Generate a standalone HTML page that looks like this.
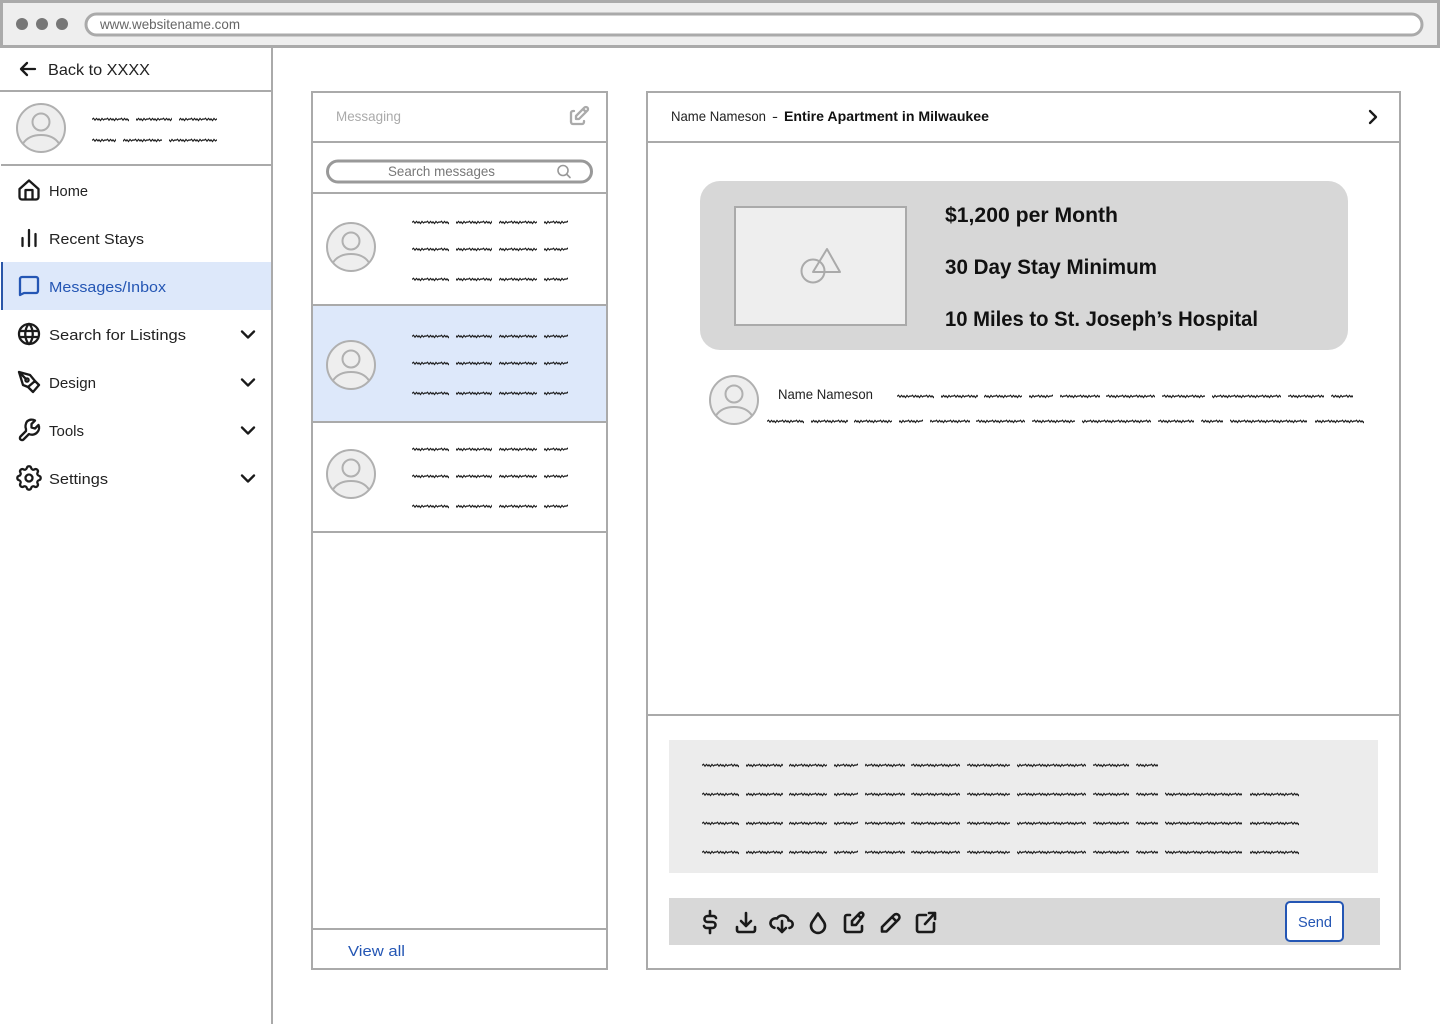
<!DOCTYPE html>
<html lang="en">
<head>
<meta charset="utf-8">
<title>Messages</title>
<style>
html,body{margin:0;padding:0;background:#fff;width:1440px;height:1024px;overflow:hidden}
svg{display:block;position:absolute;left:0;top:0}
text{font-family:"Liberation Sans",sans-serif;font-size:15px;fill:#222}
.i{fill:none;stroke:#1a1a1a;stroke-width:2.300;stroke-linecap:round;stroke-linejoin:round}
.t{stroke-width:2.600}
.b{font-weight:bold;font-size:21px;fill:#111}
</style>
</head>
<body>
<svg width="1440" height="1024" viewBox="0 0 1440 1024" xmlns="http://www.w3.org/2000/svg">
<defs>
<pattern id="w" width="14" height="7" patternUnits="userSpaceOnUse">
<path d="M0 3.500L1.500 2.200 3 4.200 4.500 2.400 6 4 7 2.800 8.500 4.600 10 2.400 11.500 4 13 2.800 14 3.500" fill="none" stroke="#1c1c1c" stroke-width="1.150"/>
</pattern>
<g id="msg3">
<rect x="0" width="37" height="7" fill="url(#w)"/><rect x="44" width="36" height="7" fill="url(#w)"/><rect x="87" width="38" height="7" fill="url(#w)"/><rect x="132" width="24" height="7" fill="url(#w)"/>
</g>
<g id="long">
<rect x="0" width="37" height="7" fill="url(#w)"/><rect x="44" width="37" height="7" fill="url(#w)"/><rect x="87" width="38" height="7" fill="url(#w)"/><rect x="132" width="24" height="7" fill="url(#w)"/><rect x="163" width="40" height="7" fill="url(#w)"/><rect x="209" width="49" height="7" fill="url(#w)"/><rect x="265" width="43" height="7" fill="url(#w)"/><rect x="315" width="69" height="7" fill="url(#w)"/><rect x="391" width="36" height="7" fill="url(#w)"/><rect x="434" width="22" height="7" fill="url(#w)"/>
</g>
<g id="tail">
<rect x="463" width="77" height="7" fill="url(#w)"/><rect x="548" width="49" height="7" fill="url(#w)"/>
</g>
<g id="av">
<circle r="24" fill="#eee" stroke="#b0b0b0" stroke-width="2"/>
<circle cy="-6" r="8.500" fill="#eee" stroke="#b0b0b0" stroke-width="2"/>
<path d="M-18 15.500C-14 9.500-7 7 0 7S14 9.500 18 15.500" fill="none" stroke="#b0b0b0" stroke-width="2"/>
</g>
<path id="chev" d="M-6-3.500L0 2.500 6-3.500" class="i"/>
</defs>

<!-- browser chrome -->
<rect x="1.500" y="1.500" width="1437" height="45" fill="#eeeeee" stroke="#aaa" stroke-width="3"/>
<circle cx="22" cy="24" r="6" fill="#777"/><circle cx="42" cy="24" r="6" fill="#777"/><circle cx="62" cy="24" r="6" fill="#777"/>
<rect x="86" y="14" width="1336" height="21" rx="10.500" fill="#fff" stroke="#aaa" stroke-width="3"/>
<text x="100" y="29" textLength="140" lengthAdjust="spacingAndGlyphs" style="font-size:14px;fill:#666">www.websitename.com</text>

<!-- sidebar -->
<rect x="1" y="262" width="271" height="48" fill="#dde8fa"/>
<rect x="1" y="262" width="2" height="48" fill="#2a56a8"/>
<path d="M272 47V1024" stroke="#aaa" stroke-width="2"/>
<path d="M0 91H272M1 165H272" stroke="#aaa" stroke-width="2"/>
<path class="i" d="M35 69H21M21 69l6-6M21 69l6 6"/>
<text x="48" y="75" textLength="102" lengthAdjust="spacingAndGlyphs" style="font-size:16px">Back to XXXX</text>
<use href="#av" x="41" y="128"/>
<g transform="translate(92 116)"><rect width="37" height="7" fill="url(#w)"/><rect x="44" width="36" height="7" fill="url(#w)"/><rect x="87" width="38" height="7" fill="url(#w)"/></g>
<g transform="translate(92 137)"><rect width="24" height="7" fill="url(#w)"/><rect x="31" width="39" height="7" fill="url(#w)"/><rect x="77" width="48" height="7" fill="url(#w)"/></g>

<path class="i" d="M22 199.500h14a2.500 2.500 0 0 0 2.500-2.500V189L29 180.500 19.500 189v8a2.500 2.500 0 0 0 2.500 2.500zM25.500 199.500v-9.500h7v9.500"/>
<text x="49" y="196" textLength="39" lengthAdjust="spacingAndGlyphs">Home</text>
<path class="i" d="M22.500 238v8M29 230v16M35.500 234v12"/>
<text x="49" y="244" textLength="95" lengthAdjust="spacingAndGlyphs">Recent Stays</text>
<path class="i" style="stroke:#2456b4" d="M20 295V279a2 2 0 0 1 2-2h14a2 2 0 0 1 2 2v12a2 2 0 0 1-2 2H24z"/>
<text x="49" y="292" textLength="117" lengthAdjust="spacingAndGlyphs" style="fill:#2456b4">Messages/Inbox</text>
<g transform="translate(17 322)"><circle cx="12" cy="12" r="10" class="i"/><path class="i" d="M2.600 9h18.800M2.600 15h18.800M11.500 2a17 17 0 0 0 0 20M12.500 2a17 17 0 0 1 0 20"/></g>
<text x="49" y="340" textLength="137" lengthAdjust="spacingAndGlyphs">Search for Listings</text>
<path class="i" d="M19 372L30 375 35 381 28 387 23 385zM35 381L39 385 33 392 28 387M19 372L26 379"/><circle cx="27" cy="380" r="1.600" class="i"/>
<text x="49" y="388" textLength="47" lengthAdjust="spacingAndGlyphs">Design</text>
<g transform="translate(17 418)"><path class="i" d="M9 15l-5.500 5.500a2 2 0 0 0 3 3L12 18c3 1.500 6.500.5 8.500-2 1.800-2.200 2-5 1-7l-3.500 3.500-3.500-1V8l3.500-3.500c-2.500-1.500-6-1-8 1C8.500 7.500 8 11 9 13z" transform="translate(0 -2)"/></g>
<text x="49" y="436" textLength="35" lengthAdjust="spacingAndGlyphs">Tools</text>
<g transform="translate(17 466)"><path class="i" style="stroke-width:1.750" d="M10.325 4.317c.426-1.756 2.924-1.756 3.350 0a1.724 1.724 0 0 0 2.573 1.066c1.543-.94 3.310.826 2.370 2.370a1.724 1.724 0 0 0 1.065 2.572c1.756.426 1.756 2.924 0 3.350a1.724 1.724 0 0 0-1.066 2.573c.94 1.543-.826 3.310-2.370 2.370a1.724 1.724 0 0 0-2.572 1.065c-.426 1.756-2.924 1.756-3.350 0a1.724 1.724 0 0 0-2.573-1.066c-1.543.94-3.310-.826-2.370-2.370a1.724 1.724 0 0 0-1.065-2.572c-1.756-.426-1.756-2.924 0-3.350a1.724 1.724 0 0 0 1.066-2.573c-.94-1.543.826-3.310 2.370-2.370.996.608 2.296.07 2.572-1.065z" transform="translate(-3.600 -3.600) scale(1.300)"/><circle cx="12" cy="12" r="3.500" class="i"/></g>
<text x="49" y="484" textLength="59" lengthAdjust="spacingAndGlyphs">Settings</text>
<use href="#chev" x="248" y="335"/><use href="#chev" x="248" y="383"/><use href="#chev" x="248" y="431"/><use href="#chev" x="248" y="479"/>

<!-- middle panel -->
<rect x="312" y="306" width="295" height="116" fill="#dde8fa"/>
<rect x="312" y="92" width="295" height="877" fill="none" stroke="#aaa" stroke-width="2"/>
<path d="M312 142H607M312 193H607M312 305H607M312 422H607M312 532H607M312 929H607" stroke="#aaa" stroke-width="2"/>
<text x="336" y="121" textLength="65" lengthAdjust="spacingAndGlyphs" style="fill:#aaa;font-size:14px">Messaging</text>
<g transform="translate(567 104)"><path d="M7 7H6a2 2 0 0 0-2 2v9a2 2 0 0 0 2 2h9a2 2 0 0 0 2-2v-1M20.385 6.585a2.100 2.100 0 0 0-2.970-2.970L9 12v3h3l8.385-8.415zM16 5l3 3" class="i" style="stroke:#aaa"/></g>
<rect x="327.500" y="161" width="264" height="21" rx="10.500" fill="#fff" stroke="#999" stroke-width="3"/>
<text x="388" y="176" textLength="107" lengthAdjust="spacingAndGlyphs" style="fill:#777;font-size:14px">Search messages</text>
<circle cx="563" cy="170.500" r="5" fill="none" stroke="#999" stroke-width="1.600"/><path d="M567 174.500l3 3" stroke="#999" stroke-width="1.600" stroke-linecap="round"/>
<use href="#av" x="351" y="247"/><use href="#av" x="351" y="365"/><use href="#av" x="351" y="474"/>
<use href="#msg3" x="412" y="219"/><use href="#msg3" x="412" y="246"/><use href="#msg3" x="412" y="276"/>
<use href="#msg3" x="412" y="333"/><use href="#msg3" x="412" y="360"/><use href="#msg3" x="412" y="390"/>
<use href="#msg3" x="412" y="446"/><use href="#msg3" x="412" y="473"/><use href="#msg3" x="412" y="503"/>
<text x="348" y="956" textLength="57" lengthAdjust="spacingAndGlyphs" style="fill:#2456b4">View all</text>

<!-- right panel -->
<rect x="647" y="92" width="753" height="877" fill="none" stroke="#aaa" stroke-width="2"/>
<path d="M647 142H1400M648 715H1400" stroke="#aaa" stroke-width="2"/>
<text x="671" y="121" textLength="95" lengthAdjust="spacingAndGlyphs" style="font-size:14px">Name Nameson</text>
<text x="772" y="121" textLength="6" lengthAdjust="spacingAndGlyphs" style="font-size:14px">-</text>
<text x="784" y="121" textLength="205" lengthAdjust="spacingAndGlyphs" style="font-size:14px;font-weight:bold;fill:#111">Entire Apartment in Milwaukee</text>
<path class="i" d="M1370 111l6 6-6 6"/>

<rect x="700" y="181" width="648" height="169" rx="20" fill="#d7d7d7"/>
<rect x="735" y="207" width="171" height="118" fill="#eeeeee" stroke="#aaa" stroke-width="2"/>
<circle cx="813" cy="271" r="11.500" fill="none" stroke="#aaa" stroke-width="2"/>
<path d="M827 249L840 272H813z" fill="none" stroke="#aaa" stroke-width="2" stroke-linejoin="round"/>
<text x="945" y="222" class="b" textLength="173" lengthAdjust="spacingAndGlyphs">$1,200 per Month</text>
<text x="945" y="274" class="b" textLength="212" lengthAdjust="spacingAndGlyphs">30 Day Stay Minimum</text>
<text x="945" y="326" class="b" textLength="313" lengthAdjust="spacingAndGlyphs">10 Miles to St. Joseph’s Hospital</text>

<use href="#av" x="734" y="400"/>
<text x="778" y="399" textLength="95" lengthAdjust="spacingAndGlyphs" style="font-size:14px">Name Nameson</text>
<use href="#long" x="897" y="393"/>
<use href="#long" x="767" y="418"/><use href="#tail" x="767" y="418"/>

<rect x="669" y="740" width="709" height="133" fill="#ececec"/>
<use href="#long" x="702" y="762"/>
<use href="#long" x="702" y="791"/><use href="#tail" x="702" y="791"/>
<use href="#long" x="702" y="820"/><use href="#tail" x="702" y="820"/>
<use href="#long" x="702" y="849"/><use href="#tail" x="702" y="849"/>

<rect x="669" y="898" width="711" height="47" fill="#d8d8d8"/>
<g transform="translate(698 910)"><path class="i t" d="M18 8A3 3 0 0 0 15 6H9.500a3 3 0 0 0 0 6h5a3 3 0 0 1 0 6H9a3 3 0 0 1-3-2M12 1v5M12 18v5"/></g>
<g transform="translate(734 910)"><path class="i t" d="M3 17v3a2 2 0 0 0 2 2h14a2 2 0 0 0 2-2v-3M7 11l5 5 5-5M12 3v13"/></g>
<g transform="translate(770 910)"><path class="i t" d="M19.500 18a3.800 3.800 0 0 0 0-7.500h-1a6 5 0 0 0-11.500-2 5 4.600 0 0 0-2.600 9.300M12 11v11M8 18l4 4 4-4"/></g>
<g transform="translate(806 910)"><path class="i t" d="M6.200 12a7 7 0 1 0 11.600 0L12 3.500z"/></g>
<g transform="translate(842 910)"><path class="i t" d="M8 5H5a2 2 0 0 0-2 2v13a2 2 0 0 0 2 2h13a2 2 0 0 0 2-2v-4M20.800 6.200a2.200 2.200 0 0 0-3.100-3.100L10 11v4h4zM16 5l3 3"/></g>
<g transform="translate(878 910)"><path class="i t" d="M4 21.500h4.500L20.500 9.500a3 3 0 1 0-4.500-4.500L4 17zM14 7l4.500 4.500"/></g>
<g transform="translate(914 910)"><path class="i t" d="M12 5H5a2 2 0 0 0-2 2v13a2 2 0 0 0 2 2h13a2 2 0 0 0 2-2v-7M11 14L21 3M15 3h6v6"/></g>

<rect x="1286" y="902" width="57" height="39" rx="4" fill="#fff" stroke="#2456b4" stroke-width="2"/>
<text x="1298" y="927" textLength="34" lengthAdjust="spacingAndGlyphs" style="fill:#2456b4">Send</text>
</svg>
</body>
</html>
